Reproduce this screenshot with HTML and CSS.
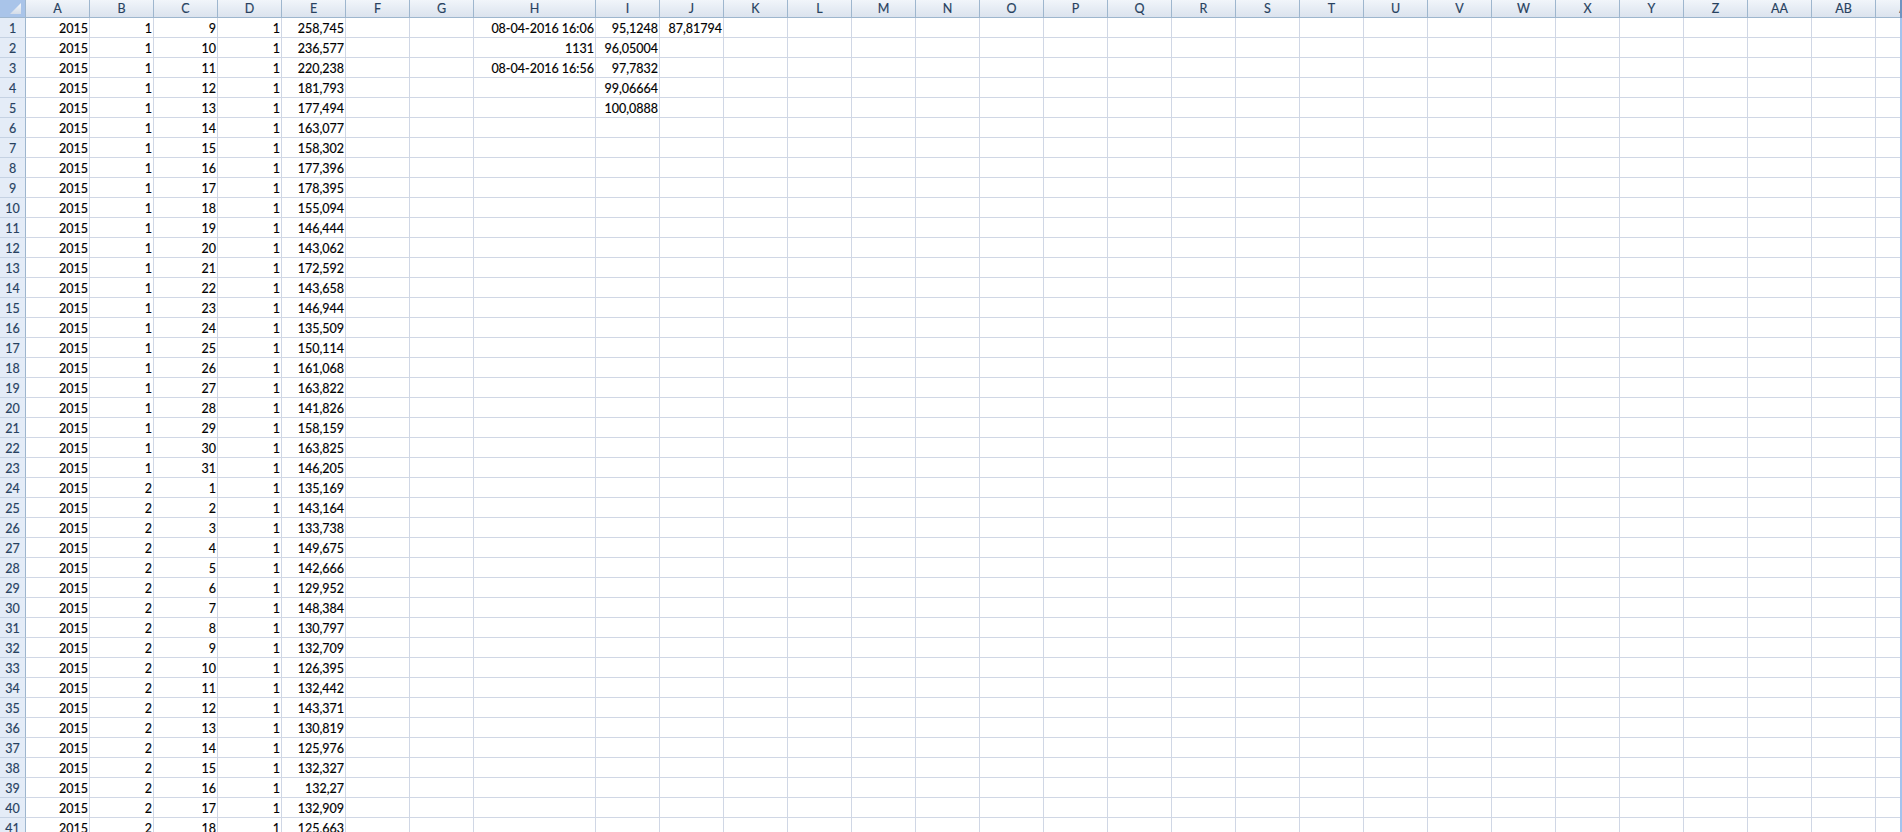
FILE: index.html
```html
<!DOCTYPE html>
<html lang="en">
<head>
<meta charset="utf-8">
<title>Sheet1</title>
<link rel="stylesheet" href="styles.css">
</head>
<body>
<main class="window">
<div class="sheet">
<table class="grid">
<colgroup><col class="col-rh"><col span="7" class="col-std"><col class="col-wide"><col span="21" class="col-std"></colgroup>
<thead>
<tr><th class="corner"><svg class="corner-mark" width="13" height="13" viewBox="0 0 13 13" aria-hidden="true"><defs><linearGradient id="cornerFill" x1="0" y1="0" x2="0" y2="1"><stop offset="0" stop-color="#f4f7fb"/><stop offset="1" stop-color="#d3dce8"/></linearGradient></defs><path d="M1 12 12 1V12Z" fill="url(#cornerFill)"/></svg></th><th>A</th><th>B</th><th>C</th><th>D</th><th>E</th><th>F</th><th>G</th><th>H</th><th>I</th><th>J</th><th>K</th><th>L</th><th>M</th><th>N</th><th>O</th><th>P</th><th>Q</th><th>R</th><th>S</th><th>T</th><th>U</th><th>V</th><th>W</th><th>X</th><th>Y</th><th>Z</th><th>AA</th><th>AB</th><th>AC</th></tr>
</thead>
<tbody>
<tr><th>1<td>2015<td>1<td>9<td>1<td>258,745<td><td><td>08-04-2016 16:06<td>95,1248<td>87,81794<td><td><td><td><td><td><td><td><td><td><td><td><td><td><td><td><td><td><td><td></tr>
<tr><th>2<td>2015<td>1<td>10<td>1<td>236,577<td><td><td>1131<td>96,05004<td><td><td><td><td><td><td><td><td><td><td><td><td><td><td><td><td><td><td><td><td></tr>
<tr><th>3<td>2015<td>1<td>11<td>1<td>220,238<td><td><td>08-04-2016 16:56<td>97,7832<td><td><td><td><td><td><td><td><td><td><td><td><td><td><td><td><td><td><td><td><td></tr>
<tr><th>4<td>2015<td>1<td>12<td>1<td>181,793<td><td><td><td>99,06664<td><td><td><td><td><td><td><td><td><td><td><td><td><td><td><td><td><td><td><td><td></tr>
<tr><th>5<td>2015<td>1<td>13<td>1<td>177,494<td><td><td><td>100,0888<td><td><td><td><td><td><td><td><td><td><td><td><td><td><td><td><td><td><td><td><td></tr>
<tr><th>6<td>2015<td>1<td>14<td>1<td>163,077<td><td><td><td><td><td><td><td><td><td><td><td><td><td><td><td><td><td><td><td><td><td><td><td><td></tr>
<tr><th>7<td>2015<td>1<td>15<td>1<td>158,302<td><td><td><td><td><td><td><td><td><td><td><td><td><td><td><td><td><td><td><td><td><td><td><td><td></tr>
<tr><th>8<td>2015<td>1<td>16<td>1<td>177,396<td><td><td><td><td><td><td><td><td><td><td><td><td><td><td><td><td><td><td><td><td><td><td><td><td></tr>
<tr><th>9<td>2015<td>1<td>17<td>1<td>178,395<td><td><td><td><td><td><td><td><td><td><td><td><td><td><td><td><td><td><td><td><td><td><td><td><td></tr>
<tr><th>10<td>2015<td>1<td>18<td>1<td>155,094<td><td><td><td><td><td><td><td><td><td><td><td><td><td><td><td><td><td><td><td><td><td><td><td><td></tr>
<tr><th>11<td>2015<td>1<td>19<td>1<td>146,444<td><td><td><td><td><td><td><td><td><td><td><td><td><td><td><td><td><td><td><td><td><td><td><td><td></tr>
<tr><th>12<td>2015<td>1<td>20<td>1<td>143,062<td><td><td><td><td><td><td><td><td><td><td><td><td><td><td><td><td><td><td><td><td><td><td><td><td></tr>
<tr><th>13<td>2015<td>1<td>21<td>1<td>172,592<td><td><td><td><td><td><td><td><td><td><td><td><td><td><td><td><td><td><td><td><td><td><td><td><td></tr>
<tr><th>14<td>2015<td>1<td>22<td>1<td>143,658<td><td><td><td><td><td><td><td><td><td><td><td><td><td><td><td><td><td><td><td><td><td><td><td><td></tr>
<tr><th>15<td>2015<td>1<td>23<td>1<td>146,944<td><td><td><td><td><td><td><td><td><td><td><td><td><td><td><td><td><td><td><td><td><td><td><td><td></tr>
<tr><th>16<td>2015<td>1<td>24<td>1<td>135,509<td><td><td><td><td><td><td><td><td><td><td><td><td><td><td><td><td><td><td><td><td><td><td><td><td></tr>
<tr><th>17<td>2015<td>1<td>25<td>1<td>150,114<td><td><td><td><td><td><td><td><td><td><td><td><td><td><td><td><td><td><td><td><td><td><td><td><td></tr>
<tr><th>18<td>2015<td>1<td>26<td>1<td>161,068<td><td><td><td><td><td><td><td><td><td><td><td><td><td><td><td><td><td><td><td><td><td><td><td><td></tr>
<tr><th>19<td>2015<td>1<td>27<td>1<td>163,822<td><td><td><td><td><td><td><td><td><td><td><td><td><td><td><td><td><td><td><td><td><td><td><td><td></tr>
<tr><th>20<td>2015<td>1<td>28<td>1<td>141,826<td><td><td><td><td><td><td><td><td><td><td><td><td><td><td><td><td><td><td><td><td><td><td><td><td></tr>
<tr><th>21<td>2015<td>1<td>29<td>1<td>158,159<td><td><td><td><td><td><td><td><td><td><td><td><td><td><td><td><td><td><td><td><td><td><td><td><td></tr>
<tr><th>22<td>2015<td>1<td>30<td>1<td>163,825<td><td><td><td><td><td><td><td><td><td><td><td><td><td><td><td><td><td><td><td><td><td><td><td><td></tr>
<tr><th>23<td>2015<td>1<td>31<td>1<td>146,205<td><td><td><td><td><td><td><td><td><td><td><td><td><td><td><td><td><td><td><td><td><td><td><td><td></tr>
<tr><th>24<td>2015<td>2<td>1<td>1<td>135,169<td><td><td><td><td><td><td><td><td><td><td><td><td><td><td><td><td><td><td><td><td><td><td><td><td></tr>
<tr><th>25<td>2015<td>2<td>2<td>1<td>143,164<td><td><td><td><td><td><td><td><td><td><td><td><td><td><td><td><td><td><td><td><td><td><td><td><td></tr>
<tr><th>26<td>2015<td>2<td>3<td>1<td>133,738<td><td><td><td><td><td><td><td><td><td><td><td><td><td><td><td><td><td><td><td><td><td><td><td><td></tr>
<tr><th>27<td>2015<td>2<td>4<td>1<td>149,675<td><td><td><td><td><td><td><td><td><td><td><td><td><td><td><td><td><td><td><td><td><td><td><td><td></tr>
<tr><th>28<td>2015<td>2<td>5<td>1<td>142,666<td><td><td><td><td><td><td><td><td><td><td><td><td><td><td><td><td><td><td><td><td><td><td><td><td></tr>
<tr><th>29<td>2015<td>2<td>6<td>1<td>129,952<td><td><td><td><td><td><td><td><td><td><td><td><td><td><td><td><td><td><td><td><td><td><td><td><td></tr>
<tr><th>30<td>2015<td>2<td>7<td>1<td>148,384<td><td><td><td><td><td><td><td><td><td><td><td><td><td><td><td><td><td><td><td><td><td><td><td><td></tr>
<tr><th>31<td>2015<td>2<td>8<td>1<td>130,797<td><td><td><td><td><td><td><td><td><td><td><td><td><td><td><td><td><td><td><td><td><td><td><td><td></tr>
<tr><th>32<td>2015<td>2<td>9<td>1<td>132,709<td><td><td><td><td><td><td><td><td><td><td><td><td><td><td><td><td><td><td><td><td><td><td><td><td></tr>
<tr><th>33<td>2015<td>2<td>10<td>1<td>126,395<td><td><td><td><td><td><td><td><td><td><td><td><td><td><td><td><td><td><td><td><td><td><td><td><td></tr>
<tr><th>34<td>2015<td>2<td>11<td>1<td>132,442<td><td><td><td><td><td><td><td><td><td><td><td><td><td><td><td><td><td><td><td><td><td><td><td><td></tr>
<tr><th>35<td>2015<td>2<td>12<td>1<td>143,371<td><td><td><td><td><td><td><td><td><td><td><td><td><td><td><td><td><td><td><td><td><td><td><td><td></tr>
<tr><th>36<td>2015<td>2<td>13<td>1<td>130,819<td><td><td><td><td><td><td><td><td><td><td><td><td><td><td><td><td><td><td><td><td><td><td><td><td></tr>
<tr><th>37<td>2015<td>2<td>14<td>1<td>125,976<td><td><td><td><td><td><td><td><td><td><td><td><td><td><td><td><td><td><td><td><td><td><td><td><td></tr>
<tr><th>38<td>2015<td>2<td>15<td>1<td>132,327<td><td><td><td><td><td><td><td><td><td><td><td><td><td><td><td><td><td><td><td><td><td><td><td><td></tr>
<tr><th>39<td>2015<td>2<td>16<td>1<td>132,27<td><td><td><td><td><td><td><td><td><td><td><td><td><td><td><td><td><td><td><td><td><td><td><td><td></tr>
<tr><th>40<td>2015<td>2<td>17<td>1<td>132,909<td><td><td><td><td><td><td><td><td><td><td><td><td><td><td><td><td><td><td><td><td><td><td><td><td></tr>
<tr><th>41<td>2015<td>2<td>18<td>1<td>125,663<td><td><td><td><td><td><td><td><td><td><td><td><td><td><td><td><td><td><td><td><td><td><td><td><td></tr>
</tbody>
</table>
</div>
<div class="edge"></div>
</main>
</body>
</html>
```
FILE: styles.css
```css
html, body {
  margin: 0;
  height: 100%;
  overflow: hidden;
  background: #fff;
}
.window {
  display: flex;
  height: 832px;
  width: 1902px;
}
.sheet {
  flex: 1;
  min-width: 0;
  overflow: hidden;
}
.edge {
  width: 2px;
  background: linear-gradient(to bottom, #6f93c0 0, #6f93c0 18px, #a3c3ee 18px);
}
.grid {
  table-layout: fixed;
  width: 1940px;
  border-collapse: separate;
  border-spacing: 0;
  font-family: "Lato", "Liberation Sans", sans-serif;
  font-size: 12.5px;
  line-height: 15px;
  color: #000;
  -webkit-text-stroke: 0.15px currentColor;
}
.col-rh { width: 26px; }
.col-std { width: 64px; }
.col-wide { width: 122px; }
thead th {
  height: 18px;
  box-sizing: border-box;
  padding: 0;
  font-weight: 400;
  color: #27415f;
  text-align: center;
  overflow: hidden;
  background: linear-gradient(to bottom, #f1f5fa, #dbe3ee);
  border-right: 1px solid #9eb6ce;
  border-bottom: 1px solid #9eb6ce;
}
thead th.corner {
  background: #a9c4e9;
  text-align: right;
  line-height: 0;
  vertical-align: bottom;
}
.corner-mark {
  display: inline-block;
  margin: 0 3px 2px 0;
}
tbody th {
  height: 20px;
  box-sizing: border-box;
  padding: 1px 0 0;
  font-weight: 400;
  color: #27415f;
  text-align: center;
  background: #e4ecf7;
  border-right: 1px solid #9eb6ce;
  border-bottom: 1px solid #c5d2e3;
}
tbody td {
  height: 20px;
  box-sizing: border-box;
  padding: 1px 1px 0 0;
  text-align: right;
  white-space: nowrap;
  overflow: hidden;
  border-right: 1px solid #d0d7e5;
  border-bottom: 1px solid #d0d7e5;
}
```
